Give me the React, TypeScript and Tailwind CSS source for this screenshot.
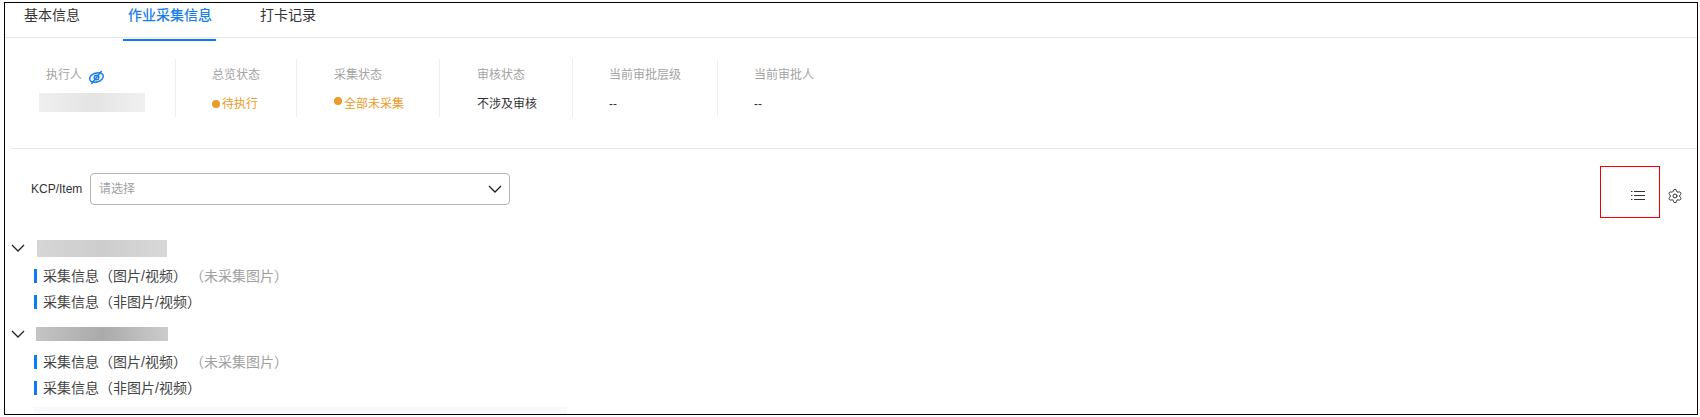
import { Settings } from "lucide-react";

const font = "[font-family:'Liberation_Sans','Noto_Sans_CJK_SC',sans-serif]";

function Chevron({ className }: { className: string }) {
  return (
    <svg viewBox="0 0 14 8" className={className} fill="none" stroke="#222" strokeWidth="1.300">
      <path d="M1 1l6 6 6-6" />
    </svg>
  );
}

function Cell({ label, width, pad, children, last }: { label: React.ReactNode; width: string; pad: string; children: React.ReactNode; last?: boolean }) {
  return (
    <div className={`${width} ${pad} h-[58px] shrink-0 ${last ? "" : "border-r border-[#eeeeee]"}`}>
      <div className="h-[32px] flex items-center text-xs leading-none text-[#a3a3a3]">{label}</div>
      <div className="h-[26px] flex items-center text-xs leading-none text-[#333333]">{children}</div>
    </div>
  );
}

function Row({ text, note }: { text: string; note?: string }) {
  return (
    <div className="h-[26px] flex items-center pl-[29px] text-sm text-[#444444]">
      <span className="w-[3px] h-[14px] bg-[#0a7cf5] mr-[6px]" />
      <span>{text}</span>
      {note && <span className="ml-[3px] text-[#a0a0a0]">{note}</span>}
    </div>
  );
}

export default function App() {
  return (
    <div className={`h-[417px] w-full bg-white pt-[2px] pl-[4px] pr-[2px] pb-[2px] ${font}`}>
      <div className="relative h-[413px] border border-black overflow-hidden">
        {/* tabs */}
        <div className="h-[35px] flex border-b border-[#e6e6e6] text-sm text-[#333333]">
          <div className="pl-[19px] w-[118px] pt-[2px]">基本信息</div>
          <div className="w-[88px] h-[34px] border-b-2 border-[#0a7cf5] pl-[5px] pt-[2px] font-medium text-[#1a7fe8] box-content -mb-px">作业采集信息</div>
          <div className="pl-[44px] pt-[2px]">打卡记录</div>
        </div>
        {/* info */}
        <div className="flex mt-[21px]">
          <Cell width="w-[171px]" pad="pl-[41px]" label={
            <span className="flex items-center">执行人
              <svg viewBox="0 0 18 16" className="w-[17px] h-[15px] ml-[6px] mt-[4px]" fill="none" stroke="#1a7fe8" strokeWidth="1.600">
                <ellipse cx="9" cy="8" rx="7.500" ry="4.800" transform="rotate(-18 9 8)" />
                <circle cx="9" cy="8" r="2.400" />
                <path d="M14.500 1L3.500 15" />
              </svg>
            </span>}>
            <div className="w-[106px] h-[19px] -ml-[7px] -mt-[4px] bg-gradient-to-r from-[#efefef] via-[#e4e4e4] to-[#f0f0f0]" />
          </Cell>
          <Cell width="w-[121px]" pad="pl-[36px]" label="总览状态">
            <span className="w-2 h-2 rounded-full bg-[#ec9a2a] mr-[2px]" /><span className="text-[#ec9a2a]">待执行</span>
          </Cell>
          <Cell width="w-[143px]" pad="pl-[37px]" label="采集状态">
            <span className="w-2 h-2 rounded-full bg-[#ec9a2a] mr-[2px] -mt-[6px]" /><span className="text-[#ec9a2a]">全部未采集</span>
          </Cell>
          <Cell width="w-[133px]" pad="pl-[37px]" label="审核状态">不涉及审核</Cell>
          <Cell width="w-[145px]" pad="pl-[36px]" label="当前审批层级">--</Cell>
          <Cell width="w-[120px]" pad="pl-[36px]" last label="当前审批人">--</Cell>
        </div>
        {/* divider */}
        <div className="ml-[6px] mt-[31px] h-px bg-[#e6e6e6]" />
        {/* filter */}
        <div className="flex items-center mt-[24px] h-[32px]">
          <span className="ml-[26px] w-[59px] text-xs text-[#333333]">KCP/Item</span>
          <div className="w-[420px] h-[32px] border border-[#b5b5b5] rounded-[4px] flex items-center justify-between pl-[8px] pr-[7px] text-xs text-[#a0a0a0]">
            <span>请选择</span>
            <Chevron className="w-[14px] h-[8px]" />
          </div>
          <div className="ml-auto flex items-center mt-[13px]">
            <svg viewBox="0 0 14 11" className="w-[14px] h-[11px]" fill="none" stroke="#333" strokeWidth="1.200">
              <path d="M3 1.500h11M3 5.500h11M3 9.500h11M0 1.500h1.500M0 5.500h1.500M0 9.500h1.500" />
            </svg>
            <Settings className="w-4 h-4 ml-[22px] mr-[14px] text-[#333333]" strokeWidth={1.500} />
          </div>
        </div>
        {/* tree */}
        <div className="mt-[34px] flex items-center h-[18px] pl-[6px]">
          <Chevron className="w-[14px] h-[8px]" />
          <div className="ml-[12px] w-[130px] h-[17px] bg-gradient-to-r from-[#d6d6d6] via-[#cdcdcd] to-[#d8d8d8]" />
        </div>
        <div className="mt-[6px]">
          <Row text="采集信息（图片/视频）" note="（未采集图片）" />
          <Row text="采集信息（非图片/视频）" />
        </div>
        <div className="mt-[10px] flex items-center h-[18px] pl-[6px]">
          <Chevron className="w-[14px] h-[8px]" />
          <div className="ml-[11px] w-[132px] h-[14px] bg-gradient-to-r from-[#c4c4c4] via-[#aaaaaa] to-[#cccccc]" />
        </div>
        <div className="mt-[6px]">
          <Row text="采集信息（图片/视频）" note="（未采集图片）" />
          <Row text="采集信息（非图片/视频）" />
        </div>
        <div className="ml-[29px] w-[533px] h-[8px] mt-[6px] bg-[#f8f9fd]" />
        {/* annotation box */}
        <div className="absolute left-[1595px] top-[163px] w-[60px] h-[52px] border border-[#f00000]" />
      </div>
    </div>
  );
}
